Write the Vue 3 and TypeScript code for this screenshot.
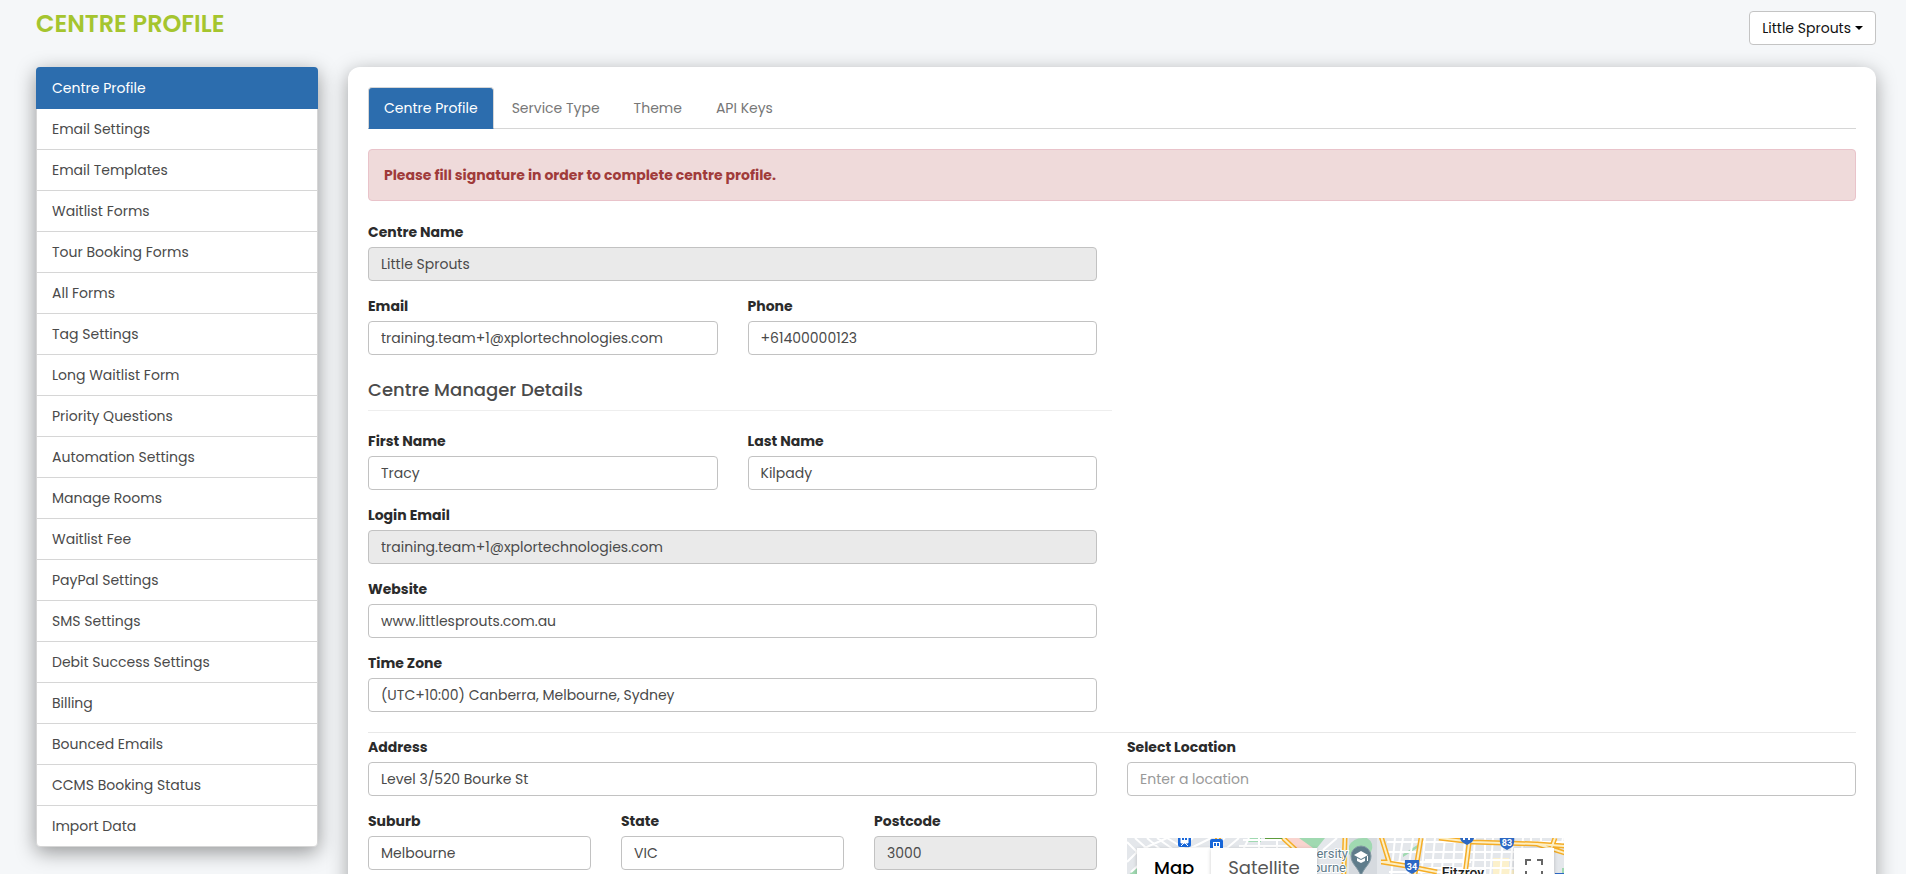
<script setup lang="ts">
import { ref } from 'vue'

const menu: string[] = [
  'Centre Profile', 'Email Settings', 'Email Templates', 'Waitlist Forms',
  'Tour Booking Forms', 'All Forms', 'Tag Settings', 'Long Waitlist Form',
  'Priority Questions', 'Automation Settings', 'Manage Rooms', 'Waitlist Fee',
  'PayPal Settings', 'SMS Settings', 'Debit Success Settings', 'Billing',
  'Bounced Emails', 'CCMS Booking Status', 'Import Data',
]
const tabs: string[] = ['Centre Profile', 'Service Type', 'Theme', 'API Keys']

const activeMenu = ref(0)
const activeTab = ref(0)

const form = ref({
  centreName: 'Little Sprouts',
  email: 'training.team+1@xplortechnologies.com',
  phone: '+61400000123',
  firstName: 'Tracy',
  lastName: 'Kilpady',
  loginEmail: 'training.team+1@xplortechnologies.com',
  website: 'www.littlesprouts.com.au',
  timeZone: '(UTC+10:00) Canberra, Melbourne, Sydney',
  address: 'Level 3/520 Bourke St',
  suburb: 'Melbourne',
  state: 'VIC',
  postcode: '3000',
  location: '',
})
</script>

<template>
  <div class="page">
    <header class="top">
      <h1>CENTRE PROFILE</h1>
      <button type="button" class="centre-btn">Little Sprouts <span class="caret"></span></button>
    </header>

    <div class="body">
      <nav class="side">
        <a
          v-for="(item, i) in menu"
          :key="item"
          href="#"
          :class="{ active: i === activeMenu }"
          @click.prevent="activeMenu = i"
        >{{ item }}</a>
      </nav>

      <main class="card">
        <nav class="tabs">
          <a
            v-for="(tab, i) in tabs"
            :key="tab"
            href="#"
            :class="{ active: i === activeTab }"
            @click.prevent="activeTab = i"
          >{{ tab }}</a>
        </nav>

        <div class="alert" role="alert">Please fill signature in order to complete centre profile.</div>

        <form @submit.prevent>
          <div class="cols">
            <section class="stack">
              <div class="field">
                <label for="centre-name">Centre Name</label>
                <input id="centre-name" v-model="form.centreName" type="text" disabled>
              </div>
              <div class="row two">
                <div class="field">
                  <label for="email">Email</label>
                  <input id="email" v-model="form.email" type="email">
                </div>
                <div class="field">
                  <label for="phone">Phone</label>
                  <input id="phone" v-model="form.phone" type="tel">
                </div>
              </div>
              <h2>Centre Manager Details</h2>
              <div class="row two">
                <div class="field">
                  <label for="first-name">First Name</label>
                  <input id="first-name" v-model="form.firstName" type="text">
                </div>
                <div class="field">
                  <label for="last-name">Last Name</label>
                  <input id="last-name" v-model="form.lastName" type="text">
                </div>
              </div>
              <div class="field">
                <label for="login-email">Login Email</label>
                <input id="login-email" v-model="form.loginEmail" type="email" disabled>
              </div>
              <div class="field">
                <label for="website">Website</label>
                <input id="website" v-model="form.website" type="text">
              </div>
              <div class="field">
                <label for="time-zone">Time Zone</label>
                <select id="time-zone" v-model="form.timeZone">
                  <option>(UTC+10:00) Canberra, Melbourne, Sydney</option>
                </select>
              </div>
            </section>
          </div>

          <hr>

          <div class="cols">
            <section class="stack">
              <div class="field">
                <label for="address">Address</label>
                <input id="address" v-model="form.address" type="text">
              </div>
              <div class="row three">
                <div class="field">
                  <label for="suburb">Suburb</label>
                  <input id="suburb" v-model="form.suburb" type="text">
                </div>
                <div class="field">
                  <label for="state">State</label>
                  <input id="state" v-model="form.state" type="text">
                </div>
                <div class="field">
                  <label for="postcode">Postcode</label>
                  <input id="postcode" v-model="form.postcode" type="text" disabled>
                </div>
              </div>
            </section>

            <section>
              <div class="field">
                <label for="location">Select Location</label>
                <input id="location" v-model="form.location" type="text" placeholder="Enter a location">
              </div>
              <div class="map">
                <svg class="tiles" viewBox="0 0 438 300" preserveAspectRatio="xMinYMin slice" aria-hidden="true">
                  <rect width="438" height="300" fill="#e4e7eb" />
                  <!-- parks and campus -->
                  <path d="M0 38 10 30V60H0zM171 0H198L190 10H182zM121 0H134V4H121z" fill="#a0d9b1" />
                  <path d="M276 16 292 6V9L276 19zM350 3H360V6H350zM435 30H438V60H435z" fill="#a0d9b1" />
                  <path d="M160 0H172L186 10H168z" fill="#f9d4cf" />
                  <path d="M366 20H382V40H366zM380 32H388V60H380z" fill="#fcf1cc" />
                  <path d="M222 0H250V60H222z" fill="#d6dadf" />
                  <path d="M222 8Q226 0 236 0H240Q248 5 244 14L236 30 222 16z" fill="#a0d9b1" />
                  <path d="M138 1H160" stroke="#5d9c3c" stroke-width="3" />
                  <!-- local streets -->
                  <g fill="none" stroke="#fff" stroke-width="2">
                    <path d="M0 24 10 14 22 8 40 0M10 14 0 4M4 34 26 14M20 0 34 12M30 0 50 14M8 0 26 16M40 0 60 12 84 0M50 12 66 0M62 10H100L112 0M84 10 98 0M96 10 116 12 122 0M116 2H160M132 0V12M150 2V12M112 8H166M138 8 136 12M196 12 210 0" />
                    <path d="M260 4H340M258 14H290M260 24H344M262 34H340M268 0 264 40M276 0 272 26M286 0 280 40M298 0 292 60M308 0 302 60M318 0 312 60M328 0 324 60M338 0 334 60M348 0 344 60M298 14H400M298 22H400M298 30H400M330 38H400M358 0V40M366 0 363 40M376 0 373 40M386 0 383 40M396 0 393 40M340 4H438M404 0V8M414 0V10M436 0 434 10" />
                    <path d="M0 70H438M0 100H438M0 140H438M0 180H438M0 220H438M0 260H438M30 60V300M80 60V300M130 60V300M180 60V300M260 60V300M330 60V300M400 60V300" />
                  </g>
                  <!-- main roads -->
                  <g fill="none" stroke="#f5ad26" stroke-width="5">
                    <path d="M156 0 170 13M218 0 216 60M254 -2 262 24H254M255 24 280 28 310 34M294 0 284 60M343 -2 335 60M312 0 346 4 410 6 438 8M410 6 438 15M428 0 424 11" />
                  </g>
                  <g fill="none" stroke="#fdefc4" stroke-width="2">
                    <path d="M156 0 170 13M218 0 216 60M254 -2 262 24H254M255 24 280 28 310 34M294 0 284 60M343 -2 335 60M312 0 346 4 410 6 438 8M410 6 438 15M428 0 424 11" />
                  </g>
                  <!-- transit stops -->
                  <g>
                    <rect x="51" y="-6" width="13" height="15" rx="2" fill="#1766d9" />
                    <path d="M54 -2H61V5H54zM54 8 57 5M61 8 58 5" fill="#fff" stroke="#fff" />
                    <path d="M55 0H57V2H55zM58 0H60V2H58z" fill="#1766d9" />
                    <path d="M88 0H90M92 0H94" stroke="#f5ad26" stroke-width="2" />
                    <rect x="83" y="1" width="13" height="14" rx="2" fill="#1766d9" />
                    <path d="M86 4H93V11H86z" fill="#fff" />
                    <path d="M87 5H89V8H87zM90 5H92V8H90z" fill="#1766d9" />
                  </g>
                  <!-- road shields -->
                  <g fill="#2c68c4">
                    <path d="M278 22H292Q293 30 290 33L285 36 280 33Q277 30 278 22z" />
                    <path d="M333 -6H347Q348 1 345 4L340 7 335 4Q332 1 333 -6z" />
                    <path d="M373 -3H387Q388 6 385 9L380 12 375 9Q372 6 373 -3z" />
                  </g>
                  <path d="M337 0V2M342 0V2" stroke="#fff" stroke-width="2" />
                  <g class="shield-text">
                    <text x="285" y="32">34</text>
                    <text x="380" y="8">83</text>
                  </g>
                  <!-- university pin -->
                  <path d="M234 8A10 10 0 0 1 244 18C244 26 237 29 234 38 231 29 224 26 224 18A10 10 0 0 1 234 8z" fill="#5f7c8b" stroke="#8399a4" />
                  <path d="M227 17 234 13 241 17 234 21zM230 20V23L234 25 238 23V20L234 22zM240 18H241V23H240z" fill="#fff" />
                  <g class="place">
                    <text x="221" y="20">ersity</text>
                    <text x="219" y="34">ourne</text>
                  </g>
                  <text class="suburb" x="336" y="40" text-anchor="middle">Fitzroy</text>
                  <path d="M428 35H438V50H428z" fill="#2c68c4" />
                </svg>
                <div class="map-type">
                  <button type="button" class="on">Map</button>
                  <button type="button">Satellite</button>
                </div>
                <button type="button" class="full" aria-label="Toggle fullscreen view">
                  <svg viewBox="0 0 18 18" width="18" height="18" aria-hidden="true">
                    <path d="M1 6V1H6M12 1H17V6M17 12V17H12M6 17H1V12" fill="none" stroke="#666" stroke-width="2" />
                  </svg>
                </button>
              </div>
            </section>
          </div>
        </form>
      </main>
    </div>
  </div>
</template>

<style>
html {
  scrollbar-width: none;
}
body {
  margin: 0;
  background: #f5f7f9;
}
</style>

<style scoped>
.page {
  padding: 11px 30px 30px 36px;
  color: #4a4a4a;
  font: 14px/20px Poppins, Inter, "Open Sans", sans-serif;
}
.page * {
  box-sizing: border-box;
}
.top {
  display: flex;
  justify-content: space-between;
  align-items: flex-start;
  height: 56px;
}
h1 {
  margin: 0;
  color: #a5c52f;
  font-size: 24px;
  line-height: 26px;
  font-weight: 600;
}
button,
input,
select {
  font: inherit;
}
.centre-btn {
  display: flex;
  align-items: center;
  gap: 4px;
  height: 34px;
  padding: 0 12px;
  border: 1px solid #c4c4c4;
  border-radius: 4px;
  background: #fff;
  color: #111;
}
.caret {
  border: 4px solid transparent;
  border-top-color: #000;
  border-bottom: 0;
}
.body {
  display: grid;
  grid-template-columns: 282px minmax(0, 1fr);
  gap: 30px;
  align-items: start;
}
.side {
  display: flex;
  flex-direction: column;
  border: 1px solid #d6d6d6;
  border-radius: 4px;
  background: #fff;
  box-shadow: 0 5px 20px rgba(0, 0, 0, 0.4);
}
.side a {
  height: 41px;
  padding: 10px 15px;
  border-bottom: 1px solid #d6d6d6;
  color: #4a4a4a;
  text-decoration: none;
}
.side a:last-child {
  height: 40px;
  border-bottom: 0;
}
.side a.active {
  margin: -1px -1px 0;
  height: 42px;
  padding: 11px 16px;
  border-bottom: 0;
  border-radius: 4px 4px 0 0;
  background: #2c6dae;
  color: #fff;
}
.card {
  padding: 20px;
  border-radius: 12px;
  background: #fff;
  box-shadow: 0 5px 20px rgba(0, 0, 0, 0.35);
}
.tabs {
  display: flex;
  gap: 2px;
  height: 42px;
  border-bottom: 1px solid #d6d6d6;
}
.tabs a {
  height: 42px;
  padding: 10px 15px;
  border: 1px solid transparent;
  border-radius: 4px 4px 0 0;
  color: #777;
  text-decoration: none;
}
.tabs a.active {
  border-color: #d6d6d6;
  border-bottom-color: #2c6dae;
  background: #2c6dae;
  color: #fff;
}
.alert {
  margin: 20px 0 21px;
  padding: 15px;
  border: 1px solid #e9c3ca;
  border-radius: 4px;
  background: #efdada;
  color: #a03b3a;
  font-weight: 700;
}
.cols {
  display: grid;
  grid-template-columns: repeat(2, minmax(0, 1fr));
  gap: 30px;
}
.stack {
  display: flex;
  flex-direction: column;
  gap: 15px;
}
.row {
  display: grid;
  gap: 30px;
}
.two {
  grid-template-columns: repeat(2, minmax(0, 1fr));
}
.three {
  grid-template-columns: repeat(3, minmax(0, 1fr));
}
.field {
  display: flex;
  flex-direction: column;
  gap: 5px;
  min-width: 0;
}
.field label {
  color: #2b2b2b;
  font-weight: 700;
}
.field input,
.field select {
  width: 100%;
  height: 34px;
  padding: 0 12px;
  appearance: none;
  border: 1px solid #c2c2c2;
  border-radius: 4px;
  background: #fff;
  color: #4a4a4a;
}
.field input:disabled {
  background: #eaeaea;
}
.field input::placeholder {
  color: #999;
}
h2 {
  margin: 10px -15px 5px 0;
  padding-bottom: 10px;
  border-bottom: 1px solid #eee;
  color: #4a4a4a;
  font-size: 18px;
  line-height: 20px;
  font-weight: 500;
}
hr {
  margin: 20px 0 4px;
  border: 0;
  border-top: 1px solid #e8e8e8;
}
.map {
  position: relative;
  width: 60%;
  height: 300px;
  margin-top: 42px;
  overflow: hidden;
}
.tiles {
  display: block;
  width: 100%;
  height: 100%;
}
.shield-text {
  fill: #fff;
  font: 700 9px Roboto, sans-serif;
  text-anchor: middle;
}
.place {
  fill: #5f7c8b;
  stroke: #fff;
  stroke-width: 2px;
  paint-order: stroke;
  font: 400 13px Roboto, sans-serif;
  text-anchor: end;
}
.suburb {
  fill: #222;
  stroke: #fff;
  stroke-width: 2px;
  paint-order: stroke;
  font: 500 14px Roboto, sans-serif;
}
.map-type {
  position: absolute;
  top: 10px;
  left: 10px;
  display: flex;
}
.map-type button {
  height: 40px;
  padding: 0 17px;
  border: 0;
  background: #fff;
  box-shadow: 0 1px 4px rgba(0, 0, 0, 0.2);
  color: #565656;
  font-size: 18px;
}
.map-type button.on {
  color: #000;
  font-weight: 500;
}
.full {
  position: absolute;
  top: 10px;
  right: 10px;
  display: grid;
  place-items: center;
  width: 40px;
  height: 40px;
  padding: 0;
  border: 0;
  background: #fff;
  box-shadow: 0 1px 4px rgba(0, 0, 0, 0.2);
}
</style>
